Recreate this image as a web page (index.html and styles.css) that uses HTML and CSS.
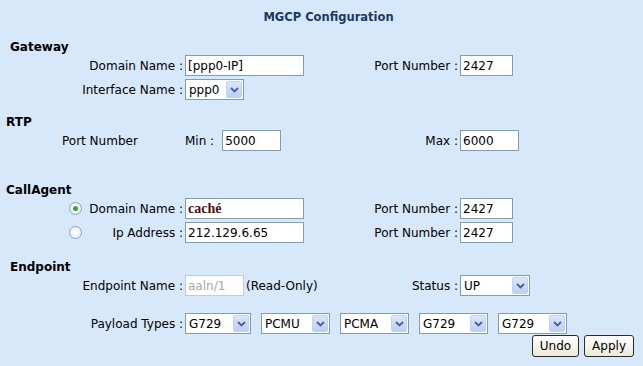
FILE: index.html
```html
<!DOCTYPE html>
<html lang="en">
<head>
  <meta charset="UTF-8" />
  <title>MGCP Configuration</title>
  <link rel="stylesheet" href="styles.css">
</head>
<body>
  <h1 class="title">MGCP Configuration</h1>

  <form class="config">
    <section class="group group-gateway">
      <h2 class="group-title">Gateway</h2>
      <div class="row">
        <label class="lbl">Domain Name :</label>
        <div class="field"><input class="text text-wide" type="text" value="[ppp0-IP]"></div>
        <label class="lbl">Port Number :</label>
        <div class="field"><input class="text text-port" type="text" value="2427"></div>
      </div>
      <div class="row">
        <label class="lbl">Interface Name :</label>
        <div class="field">
          <div class="select select-iface"><span class="select-value">ppp0</span><span class="select-btn"><svg width="9" height="6" viewBox="0 0 9 6"><path d="M1 1l3.5 3.5L8 1" fill="none" stroke="#4d6185" stroke-width="1.8"/></svg></span></div>
        </div>
      </div>
    </section>

    <section class="group group-rtp">
      <h2 class="group-title">RTP</h2>
      <div class="row">
        <div class="lbl lbl-plain">Port Number</div>
        <div class="field field-min"><span class="inline-lbl">Min :</span><input class="text text-range" type="text" value="5000"></div>
        <label class="lbl">Max :</label>
        <div class="field"><input class="text text-range" type="text" value="6000"></div>
      </div>
    </section>

    <section class="group group-agent">
      <h2 class="group-title">CallAgent</h2>
      <div class="row">
        <div class="lbl lbl-radio"><span class="radio checked"></span><span>Domain Name :</span></div>
        <div class="field"><input class="text text-wide text-cache" type="text" value="caché"></div>
        <label class="lbl">Port Number :</label>
        <div class="field"><input class="text text-port" type="text" value="2427"></div>
      </div>
      <div class="row">
        <div class="lbl lbl-radio"><span class="radio"></span><span>Ip Address :</span></div>
        <div class="field"><input class="text text-wide" type="text" value="212.129.6.65"></div>
        <label class="lbl">Port Number :</label>
        <div class="field"><input class="text text-port" type="text" value="2427"></div>
      </div>
    </section>

    <section class="group group-endpoint">
      <h2 class="group-title">Endpoint</h2>
      <div class="row">
        <label class="lbl">Endpoint Name :</label>
        <div class="field field-ro"><input class="text text-ro" type="text" value="aaln/1" disabled><span>(Read-Only)</span></div>
        <label class="lbl">Status :</label>
        <div class="field">
          <div class="select select-status"><span class="select-value">UP</span><span class="select-btn"><svg width="9" height="6" viewBox="0 0 9 6"><path d="M1 1l3.5 3.5L8 1" fill="none" stroke="#4d6185" stroke-width="1.8"/></svg></span></div>
        </div>
      </div>
      <div class="row row-payload">
        <label class="lbl">Payload Types :</label>
        <div class="payloads">
          <div class="select select-first"><span class="select-value">G729</span><span class="select-btn"><svg width="9" height="6" viewBox="0 0 9 6"><path d="M1 1l3.5 3.5L8 1" fill="none" stroke="#4d6185" stroke-width="1.8"/></svg></span></div>
          <div class="select select-codec"><span class="select-value">PCMU</span><span class="select-btn"><svg width="9" height="6" viewBox="0 0 9 6"><path d="M1 1l3.5 3.5L8 1" fill="none" stroke="#4d6185" stroke-width="1.8"/></svg></span></div>
          <div class="select select-codec"><span class="select-value">PCMA</span><span class="select-btn"><svg width="9" height="6" viewBox="0 0 9 6"><path d="M1 1l3.5 3.5L8 1" fill="none" stroke="#4d6185" stroke-width="1.8"/></svg></span></div>
          <div class="select select-codec"><span class="select-value">G729</span><span class="select-btn"><svg width="9" height="6" viewBox="0 0 9 6"><path d="M1 1l3.5 3.5L8 1" fill="none" stroke="#4d6185" stroke-width="1.8"/></svg></span></div>
          <div class="select select-codec"><span class="select-value">G729</span><span class="select-btn"><svg width="9" height="6" viewBox="0 0 9 6"><path d="M1 1l3.5 3.5L8 1" fill="none" stroke="#4d6185" stroke-width="1.8"/></svg></span></div>
        </div>
      </div>
      <div class="actions">
        <button class="btn" type="button">Undo</button>
        <button class="btn" type="button">Apply</button>
      </div>
    </section>
  </form>
</body>
</html>
```

FILE: styles.css
```css
body {
  margin: 0;
  padding: 9px 0 0;
  background-color: #d7e8fb;
  color: #000;
  font-family: 'DejaVu Sans', Verdana, sans-serif;
  font-size: 12px;
}
.title {
  margin: 0;
  padding-left: 14px;
  font-size: 11.5px;
  line-height: 16px;
  font-weight: bold;
  text-align: center;
  color: #1b3a66;
}
.group-title {
  margin: 0;
  padding-left: 10px;
  font-size: 12px;
  line-height: 16px;
  font-weight: bold;
}
.group-gateway {
  margin-top: 14px;
}
.group-rtp {
  margin-top: 14px;
}
.group-rtp .group-title,
.group-agent .group-title {
  padding-left: 6px;
}
.group-agent {
  margin-top: 31px;
}
.group-endpoint {
  margin-top: 16px;
}
.row {
  display: grid;
  grid-template-columns: 185px 185px 90px 1fr;
  align-items: center;
  height: 21px;
  margin-bottom: 3px;
}
.row-payload {
  grid-template-columns: 185px 1fr;
  margin-top: 17px;
  margin-bottom: 0;
}
.lbl {
  text-align: right;
  padding-right: 2px;
  white-space: nowrap;
}
.lbl-plain {
  text-align: left;
  padding-left: 62px;
}
.lbl-radio {
  display: flex;
  align-items: center;
  justify-content: space-between;
  padding-left: 69px;
}
.field {
  display: flex;
  align-items: center;
}
.field-min {
  gap: 8px;
}
.inline-lbl {
  white-space: nowrap;
}
.field-ro {
  gap: 2px;
  white-space: nowrap;
}
.text {
  box-sizing: border-box;
  height: 21px;
  margin: 0;
  padding: 0 2px;
  border: 1px solid #7f9db9;
  background: #fff;
  font-family: 'DejaVu Sans', Verdana, sans-serif;
  font-size: 12px;
  color: #000;
}
.text-wide {
  width: 119px;
}
.text-port {
  width: 53px;
}
.text-range {
  width: 59px;
}
.text-cache {
  font-family: 'Liberation Serif', serif;
  font-weight: bold;
  font-size: 14px;
  color: #4e1010;
}
.text-ro {
  width: 59px;
  border-color: #c0ccd8;
  color: #a8a8a8;
}
.radio {
  box-sizing: border-box;
  width: 13px;
  height: 13px;
  border: 1px solid #8a9fb6;
  border-radius: 50%;
  background: radial-gradient(circle at 40% 40%, #fff 0, #e9edf2 80%);
  display: flex;
  align-items: center;
  justify-content: center;
}
.radio.checked::after {
  content: '';
  width: 5px;
  height: 5px;
  border-radius: 50%;
  background: #3aa33a;
}
.select {
  box-sizing: border-box;
  height: 21px;
  border: 1px solid #7f9db9;
  background: #fff;
  display: flex;
  align-items: center;
  justify-content: space-between;
  padding: 1px;
}
.select-value {
  padding-left: 2px;
}
.select-btn {
  box-sizing: border-box;
  width: 16px;
  height: 17px;
  border: 1px solid #c4d2f2;
  border-radius: 2px;
  background: linear-gradient(#dbe5fd, #bccff8);
  display: flex;
  align-items: center;
  justify-content: center;
}
.select-iface {
  width: 59px;
}
.select-status {
  width: 70px;
}
.payloads {
  display: flex;
  gap: 10px;
}
.select-first {
  width: 66px;
}
.select-codec {
  width: 69px;
}
.actions {
  display: flex;
  justify-content: flex-end;
  gap: 5px;
  padding: 1px 9px 0 0;
}
.btn {
  box-sizing: border-box;
  height: 22px;
  padding: 0 7px;
  border: 1px solid #2b2b2b;
  border-radius: 3px;
  background: linear-gradient(#fff, #ece9d8);
  font-family: 'DejaVu Sans', Verdana, sans-serif;
  font-size: 12px;
  color: #000;
}
```
